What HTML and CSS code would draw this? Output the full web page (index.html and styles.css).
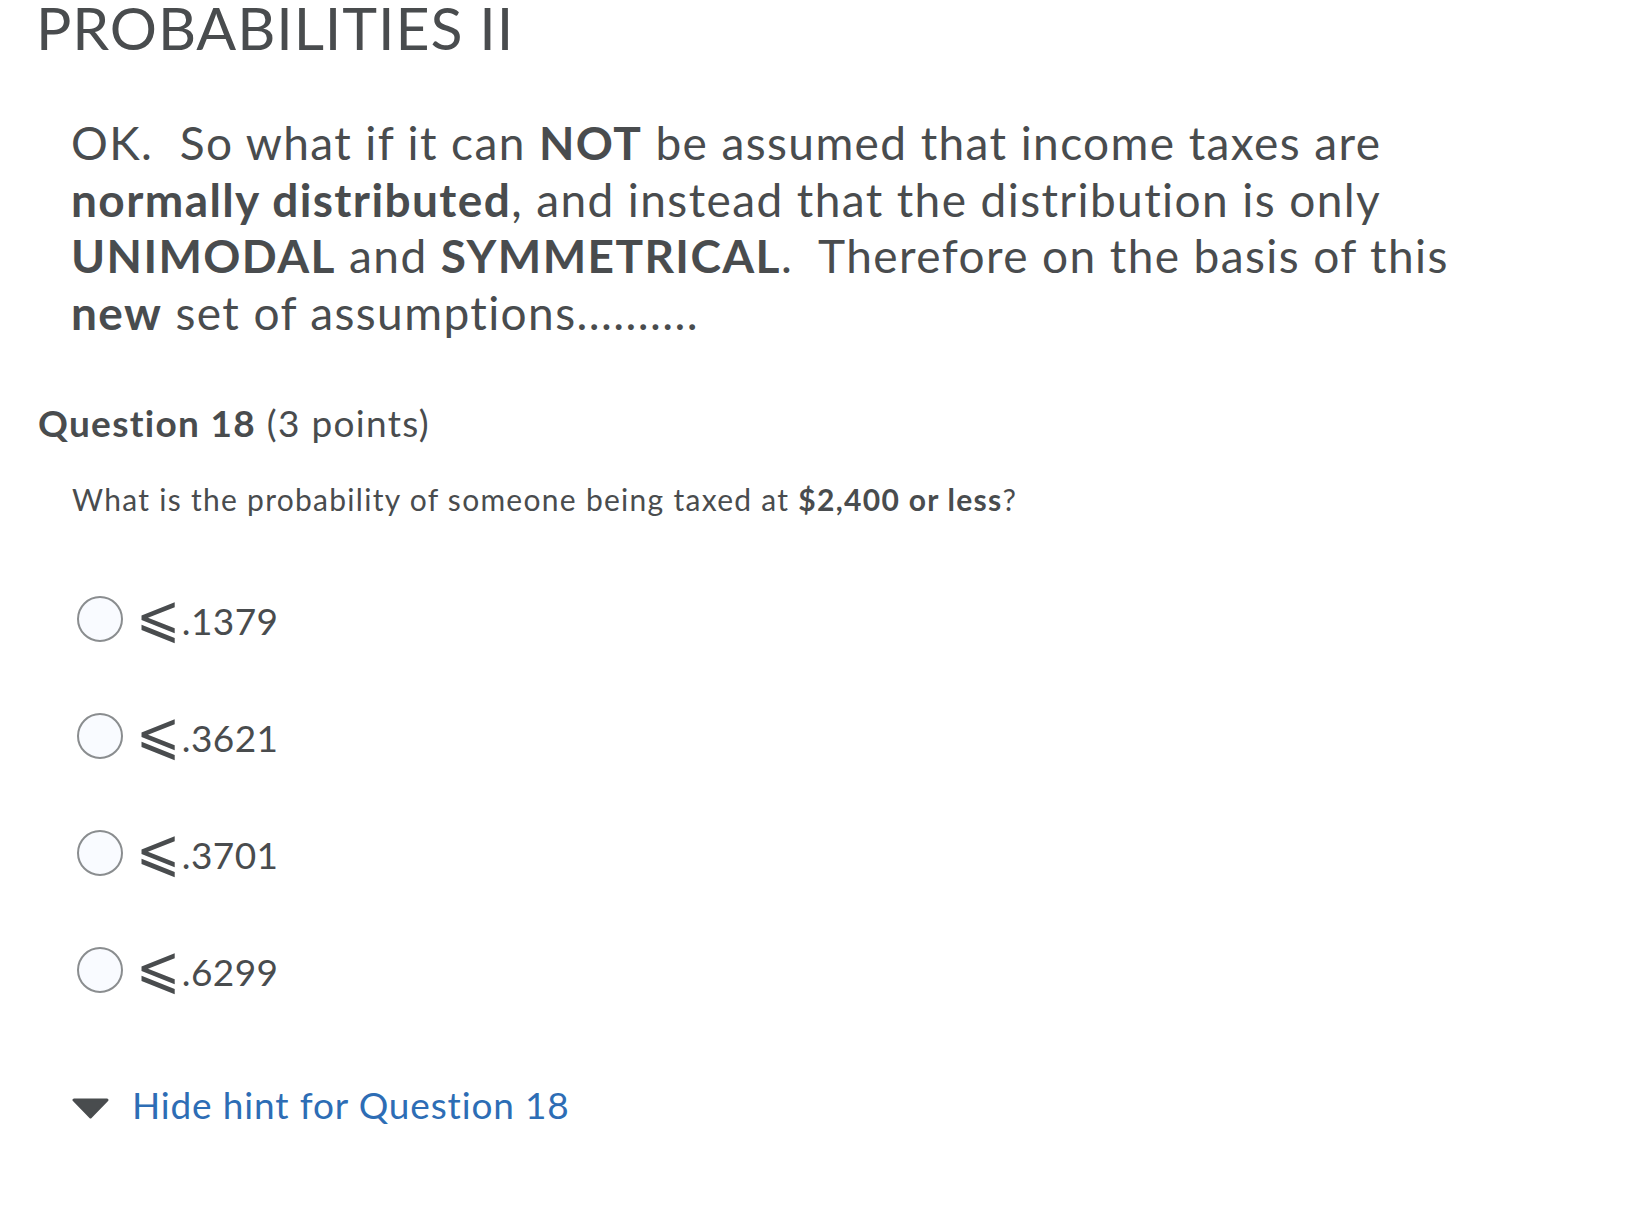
FILE: index.html
```html
<!DOCTYPE html>
<html lang="en">
<head>
  <meta charset="UTF-8">
  <title>Probabilities II</title>
  <link rel="stylesheet" href="styles.css">
</head>
<body>

  <div class="page">
    <h1 class="section-title">PROBABILITIES II</h1>

    <p class="intro">
      OK.&nbsp; So what if it can <strong>NOT</strong> be assumed that income taxes are
      <strong>normally distributed</strong>, and instead that the distribution is only
      <strong>UNIMODAL</strong> and <strong>SYMMETRICAL</strong>.&nbsp; Therefore on the basis of this
      <strong>new</strong> set of assumptions..........
    </p>

    <h2 class="question-title"><strong>Question 18</strong> (3 points)</h2>

    <p class="question-text">What is the probability of someone being taxed at <strong>$2,400 or less</strong>?</p>

    <ul class="choices">
      <li><label><input type="radio" name="q18"><span class="radio"></span><span class="choice-text"><span class="le">⩽</span>.1379</span></label></li>
      <li><label><input type="radio" name="q18"><span class="radio"></span><span class="choice-text"><span class="le">⩽</span>.3621</span></label></li>
      <li><label><input type="radio" name="q18"><span class="radio"></span><span class="choice-text"><span class="le">⩽</span>.3701</span></label></li>
      <li><label><input type="radio" name="q18"><span class="radio"></span><span class="choice-text"><span class="le">⩽</span>.6299</span></label></li>
    </ul>

    <div class="hint">
      <svg class="hint-caret" width="37" height="21" viewBox="0 0 37 21">
        <polygon points="2,2 35,2 18.5,19" fill="#494c4e" stroke="#494c4e" stroke-width="3" stroke-linejoin="round"/>
      </svg>
      <a href="#" class="hint-link">Hide hint for Question 18</a>
    </div>
  </div>

</body>
</html>
```

FILE: styles.css
```css
html {
    background: #fff;
  }

  body {
    margin: 0;
    font-family: Lato, "Noto Sans", "DejaVu Sans", sans-serif;
    font-variant-ligatures: none;
    color: #494c4e;
  }

  .page {
    padding-left: 36px;
    width: 1440px;
  }

  strong {
    font-weight: 700;
  }

  .section-title {
    margin: 0;
    font-size: 59px;
    line-height: 56px;
    font-weight: 400;
    letter-spacing: 0.9px;
  }

  .intro {
    margin: 59px 0 0 35px;
    font-size: 46px;
    line-height: 56.5px;
    letter-spacing: 1.4px;
  }

  .question-title {
    margin: 60px 0 0 2px;
    font-size: 37px;
    line-height: 44px;
    font-weight: 400;
    letter-spacing: 1.3px;
  }

  .question-text {
    margin: 36px 0 0 36px;
    font-size: 30px;
    line-height: 36px;
    letter-spacing: 1.28px;
  }

  .choices {
    list-style: none;
    margin: 43px 0 0 41px;
    padding: 0;
  }

  .choices li {
    height: 117px;
    display: flex;
    align-items: center;
  }

  .choices label {
    display: flex;
    align-items: center;
    cursor: pointer;
  }

  .choices input {
    display: none;
  }

  .radio {
    width: 46px;
    height: 46px;
    border: 2px solid #8a8d8f;
    border-radius: 50%;
    background: #f9fbff;
    box-sizing: border-box;
  }

  .choice-text {
    margin-left: 13px;
    font-size: 37px;
    line-height: 44px;
    letter-spacing: 0.4px;
  }

  .le {
    display: inline-block;
    margin-right: 1px;
    font-family: "DejaVu Sans", sans-serif;
    font-size: 53px;
    line-height: 44px;
    transform-origin: 50% 39px;
    transform: translateY(1px) scaleY(1.1);
  }

  .hint {
    margin: 55px 0 0 36px;
    display: flex;
    align-items: center;
    height: 44px;
  }

  .hint-caret {
    margin-top: 6px;
  }

  .hint-link {
    margin-left: 23px;
    font-size: 37px;
    line-height: 44px;
    letter-spacing: 0.85px;
    color: #2d6db5;
    text-decoration: none;
  }
```
